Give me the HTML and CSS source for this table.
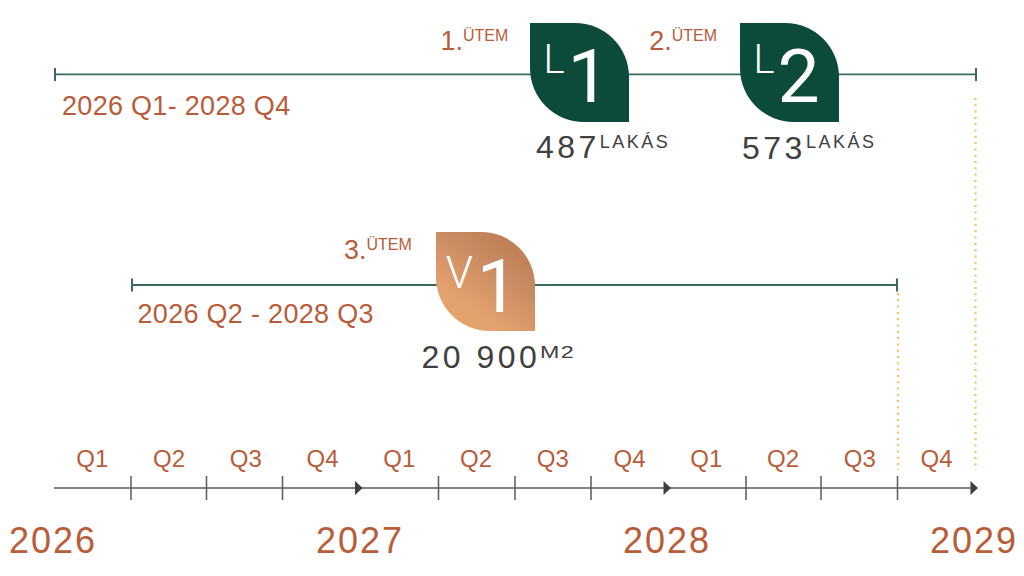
FILE: index.html
```html
<!DOCTYPE html>
<html lang="hu">
<head>
<meta charset="utf-8">
<title>Ütemezés</title>
<link rel="stylesheet" href="styles.css">
</head>
<body>
<div class="chart">
  <svg class="lines" width="1024" height="576" viewBox="0 0 1024 576">
    <g stroke="#3b6b5e" fill="none">
      <line x1="55" y1="74.3" x2="976" y2="74.3" stroke-width="1.8"/>
      <line x1="55" y1="68" x2="55" y2="81" stroke-width="2"/>
      <line x1="976" y1="68" x2="976" y2="81" stroke-width="2"/>
      <line x1="132" y1="285" x2="897" y2="285" stroke-width="1.8"/>
      <line x1="132" y1="278.5" x2="132" y2="291.5" stroke-width="2"/>
      <line x1="897" y1="278.5" x2="897" y2="291.5" stroke-width="2"/>
    </g>
    <g stroke="#f4c063" stroke-width="2.2" stroke-dasharray="2 4.3">
      <line x1="975.5" y1="98" x2="975.5" y2="470"/>
      <line x1="898" y1="293" x2="898" y2="470"/>
    </g>
  </svg>

  <div class="range range-a">2026 Q1- 2028 Q4</div>
  <div class="range range-b">2026 Q2 - 2028 Q3</div>

  <div class="phase phase-1"><span class="phase-num">1.</span><span class="phase-sup">ÜTEM</span></div>
  <div class="phase phase-2"><span class="phase-num">2.</span><span class="phase-sup">ÜTEM</span></div>
  <div class="phase phase-3"><span class="phase-num">3.</span><span class="phase-sup">ÜTEM</span></div>

  <div class="badge badge-green badge-l1"><span class="badge-letter">L</span><span class="badge-digit">1</span></div>
  <div class="badge badge-green badge-l2"><span class="badge-letter">L</span><span class="badge-digit">2</span></div>
  <div class="badge badge-copper badge-v1"><span class="badge-letter">V</span><span class="badge-digit">1</span></div>

  <div class="count count-l1"><span class="count-value">487</span><span class="count-unit">LAKÁS</span></div>
  <div class="count count-l2"><span class="count-value">573</span><span class="count-unit">LAKÁS</span></div>
  <div class="count count-v1"><span class="count-value">20 900</span><span class="count-unit count-unit-m2">M2</span></div>

  <div class="scale">
    <div class="quarters">
      <span>Q1</span><span>Q2</span><span>Q3</span><span>Q4</span>
      <span>Q1</span><span>Q2</span><span>Q3</span><span>Q4</span>
      <span>Q1</span><span>Q2</span><span>Q3</span><span>Q4</span>
    </div>
    <svg class="axis" width="1024" height="35" viewBox="0 0 1024 35">
      <g stroke="#595959" fill="none">
        <line x1="54" y1="17" x2="975" y2="17" stroke-width="1.6"/>
        <g stroke-width="1.5">
          <line x1="131" y1="5" x2="131" y2="29"/>
          <line x1="206.5" y1="5" x2="206.5" y2="29"/>
          <line x1="282.5" y1="5" x2="282.5" y2="29"/>
          <line x1="438.5" y1="5" x2="438.5" y2="29"/>
          <line x1="515" y1="5" x2="515" y2="29"/>
          <line x1="591" y1="5" x2="591" y2="29"/>
          <line x1="746" y1="5" x2="746" y2="29"/>
          <line x1="821" y1="5" x2="821" y2="29"/>
          <line x1="897.5" y1="5" x2="897.5" y2="29"/>
        </g>
      </g>
      <g fill="#3f3f3f">
        <polygon points="355,10 362.5,17 355,24"/>
        <polygon points="663.5,10 671,17 663.5,24"/>
        <polygon points="970.5,10 978,17 970.5,24"/>
      </g>
    </svg>
    <div class="years">
      <span>2026</span><span>2027</span><span>2028</span><span>2029</span>
    </div>
  </div>
</div>
</body>
</html>
```
FILE: styles.css
```css
* {
  box-sizing: border-box;
  margin: 0;
  padding: 0;
}

body {
  margin: 0;
  background: #ffffff;
  font-family: "Liberation Sans", Arial, sans-serif;
}

.chart {
  position: relative;
  width: 1024px;
  height: 576px;
  overflow: hidden;
}

.lines {
  position: absolute;
  left: 0;
  top: 0;
}

.range {
  position: absolute;
  font-size: 27px;
  line-height: 1;
  letter-spacing: 0.3px;
  color: #b95c3a;
  white-space: nowrap;
}

.range-a { left: 62px; top: 93px; }
.range-b { left: 137.5px; top: 301px; }

.phase {
  position: absolute;
  display: flex;
  align-items: flex-start;
  color: #b95c3a;
  line-height: 1;
  white-space: nowrap;
}

.phase-num { font-size: 27px; }
.phase-sup { font-size: 16px; }

.phase-1 { left: 440.4px; top: 28.2px; }
.phase-2 { left: 649.2px; top: 28.2px; }
.phase-3 { left: 344px; top: 236.5px; }

.badge {
  position: absolute;
  width: 99px;
  height: 99px;
  border-radius: 0 54px 0 54px;
  display: flex;
  justify-content: center;
  align-items: flex-start;
  padding: 15.5px 6px 0 0;
  font-family: Roboto, "Open Sans", sans-serif;
  font-weight: 400;
  color: #ffffff;
  line-height: 1;
}

.badge-green { background: #0c4a3a; }

.badge-copper {
  background: linear-gradient(215deg, #b8764f 0%, #c98b63 38%, #e2a06c 70%, #e9a66f 100%);
  padding-top: 18px;
}

.badge-l1 { left: 530px; top: 23px; }
.badge-l2 { left: 740px; top: 23px; }
.badge-v1 { left: 435.5px; top: 232px; }

.badge-letter {
  font-size: 40px;
  font-weight: 300;
  margin-top: 1.3px;
  margin-right: 3px;
}

.badge-digit { font-size: 75px; }

.badge-v1 .badge-letter {
  font-size: 44px;
  margin-top: 0.5px;
  margin-right: 4px;
}

.badge-v1 .badge-digit { font-size: 74px; }

.count {
  position: absolute;
  display: flex;
  align-items: flex-start;
  color: #404040;
  line-height: 1;
  white-space: nowrap;
}

.count-value {
  font-size: 32px;
  letter-spacing: 3.5px;
}

.count-unit {
  font-size: 18px;
  letter-spacing: 2.5px;
  margin-top: 1.5px;
}

.count-unit-m2 {
  display: inline-block;
  font-size: 16px;
  letter-spacing: 1px;
  margin-top: 4px;
  transform: scaleX(1.45);
  transform-origin: left top;
}

.count-l1 { left: 535.9px; top: 131.3px; }
.count-l2 { left: 742px; top: 131.8px; }
.count-v1 { left: 421.4px; top: 340.8px; }

.scale {
  position: absolute;
  left: 0;
  top: 446.9px;
  width: 1024px;
}

.quarters {
  margin-left: 54px;
  width: 921px;
  height: 24px;
  display: grid;
  grid-template-columns: repeat(12, 1fr);
  font-size: 24px;
  line-height: 1;
  color: #b95c3a;
  text-align: center;
}

.axis { display: block; }

.years {
  display: flex;
  justify-content: space-between;
  width: 1009px;
  margin: 16.7px 0 0 9px;
  font-size: 36px;
  letter-spacing: 2px;
  line-height: 1;
  color: #b95c3a;
}
```
